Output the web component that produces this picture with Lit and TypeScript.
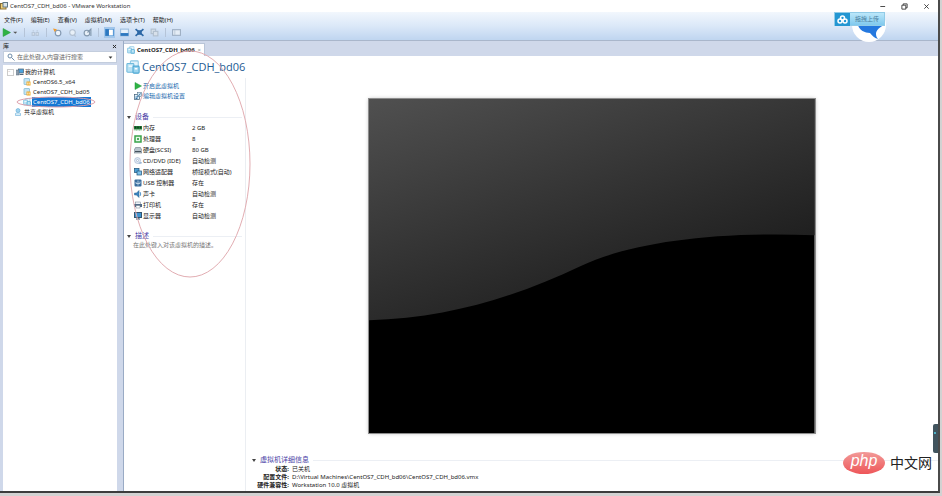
import { LitElement, html, svg, css } from "lit";
import { customElement } from "lit/decorators.js";

const glyph = (body: unknown, size = 8) =>
  html`<svg class="glyph" width=${size} height=${size} viewBox="0 0 16 16" aria-hidden="true">${body}</svg>`;

const vmShape = svg`<rect x="5" y="1" width="9" height="10" rx="1" fill="#e2f3fb" stroke="#8cc8e4" stroke-width="1.2"/><rect x="1" y="4" width="8" height="10" rx="1" fill="#b9e2f4" stroke="#6fb9dc" stroke-width="1.2"/><rect x="8" y="7" width="7" height="8" rx="1" fill="#9ad4ee" stroke="#4ba6d2" stroke-width="1.2"/><path d="M3 7h4M10 10h3" stroke="#fff" stroke-width="1.5"/>`;
const pausedShape = svg`<rect x="2" y="1" width="11" height="12" rx="1" fill="#c3e4f4" stroke="#7fb9d4" stroke-width="1.5"/><rect x="7" y="7" width="8" height="8" fill="#f0ab2a"/><path d="M9.500 9v4M12.500 9v4" stroke="#fff" stroke-width="1.500"/>`;
const hostShape = svg`<rect x="5" y="2" width="10" height="8" fill="#4aa3dd" stroke="#50667a" stroke-width="1.500"/><rect x="1" y="4" width="5" height="10" fill="#8a9aaa" stroke="#50667a"/><path d="M7 13h8" stroke="#50667a" stroke-width="2"/>`;
const sharedShape = svg`<circle cx="8" cy="5" r="4" fill="#9fd2ee" stroke="#4f9fd0"/><path d="M3 15v-4c0-2 10-2 10 0v4z" fill="#d6ecf7" stroke="#4f9fd0"/>`;
const playShape = svg`<path d="M2 1l13 7-13 7z" fill="#2fb344" stroke="#1f9a38"/>`;
const editShape = svg`<rect x="1" y="5" width="10" height="10" fill="#e3f2fa" stroke="#47677f" stroke-width="1.500"/><rect x="7" y="1" width="8" height="8" fill="#cfe6f3" stroke="#47677f"/><path d="M3 10h5M3 13h4M13 3L8 9" stroke="#3274a8" stroke-width="2"/>`;

const devices = [
  { name: "内存", value: "2 GB", icon: svg`<rect y="4" width="16" height="7" fill="#22823a"/><path d="M3 5v4M8 5v4M13 5v4" stroke="#12351c" stroke-width="3"/><path d="M1 12h14" stroke="#66b072" stroke-width="2" stroke-dasharray="2 1"/>` },
  { name: "处理器", value: "8", icon: svg`<rect x="2" y="2" width="12" height="12" fill="#e7f7e9" stroke="#3aa34a" stroke-width="3"/><rect x="6" y="6" width="4" height="4" fill="#4fae5c"/>` },
  { name: "硬盘(SCSI)", value: "80 GB", icon: svg`<path d="M3 3h10l3 6v5H0V9z" fill="#b9c3cc" stroke="#5a6670"/><path d="M2 11h12" stroke="#44515c" stroke-width="2"/>` },
  { name: "CD/DVD (IDE)", value: "自动检测", icon: svg`<circle cx="7" cy="7" r="6" fill="#dfe9f5" stroke="#94a5c0"/><circle cx="7" cy="7" r="2" fill="#fff" stroke="#8b9db9"/><path d="M8 13h7v-3z" fill="#6090c0"/>` },
  { name: "网络适配器", value: "桥接模式(自动)", icon: svg`<rect x="1" y="1" width="9" height="8" fill="#4b9fd6" stroke="#27587d" stroke-width="1.500"/><rect x="6" y="6" width="9" height="8" fill="#7cc0ea" stroke="#27587d" stroke-width="1.500"/>` },
  { name: "USB 控制器", value: "存在", icon: svg`<rect x="1" y="1" width="14" height="14" rx="2" fill="#3a6c9c"/><path d="M8 3v10M4 6v3h4M12 5v4H8" fill="none" stroke="#d8e9f7" stroke-width="1.500"/>` },
  { name: "声卡", value: "自动检测", icon: svg`<path d="M1 6h4l5-5v14l-5-5H1z" fill="#3c84c0" stroke="#28608f"/><path d="M12 4q3 4 0 8" fill="none" stroke="#5698cd" stroke-width="2"/>` },
  { name: "打印机", value: "存在", icon: svg`<rect x="3" y="2" width="10" height="5" fill="#eef3f8" stroke="#687787"/><rect x="0" y="6" width="16" height="6" fill="#516a86"/><rect x="4" y="9" width="8" height="5" fill="#fff" stroke="#687787"/>` },
  { name: "显示器", value: "自动检测", icon: svg`<rect x="1" y="1" width="14" height="10" fill="#3e92cf" stroke="#34556f" stroke-width="2"/><path d="M4 14h8M8 11v3" stroke="#34556f" stroke-width="2"/>` },
];

const tools = [
  { label: "快照", icon: svg`<circle cx="9" cy="9" r="5" fill="#eef4fb" stroke="#8399b2" stroke-width="2"/><path d="M0 1l7 1-4 5z" fill="#ee9a2f"/>` },
  { label: "恢复快照", icon: svg`<circle cx="8" cy="8" r="5" fill="#e8f0f8" stroke="#b3c1d2" stroke-width="2"/><path d="M11 13l3 2" stroke="#b3c1d2" stroke-width="2"/>` },
  { label: "管理快照", icon: svg`<circle cx="7" cy="9" r="5" fill="#e8f0f8" stroke="#8398ae" stroke-width="2"/><path d="M8 8l6-6v12" fill="none" stroke="#8398ae" stroke-width="2"/>` },
];
const views = [
  { label: "显示库", on: true, icon: svg`<rect x="1" y="2" width="14" height="12" fill="#fff" stroke="#5b9bd8" stroke-width="2"/><rect x="1" y="2" width="6" height="12" fill="#2c78c0"/>` },
  { label: "缩略图栏", on: false, icon: svg`<rect x="1" y="2" width="14" height="12" fill="#e6f1fb" stroke="#9fc0df" stroke-width="2"/><rect x="1" y="9" width="14" height="5" fill="#2c78c0"/>` },
  { label: "全屏", on: false, icon: svg`<rect x="4" y="4" width="8" height="8" fill="#2c68a6"/><path d="M1 2l14 12M15 2L1 14" stroke="#2c68a6" stroke-width="3"/>` },
  { label: "Unity", on: false, icon: svg`<rect x="2" y="2" width="8" height="8" fill="#d7e0ea" stroke="#b1bfce" stroke-width="2"/><rect x="6" y="6" width="8" height="8" fill="#d7e0ea" stroke="#b1bfce" stroke-width="2"/>` },
];

@customElement("app-root")
export class AppRoot extends LitElement {
  static styles = css`
    :host {
      display: block;
      position: relative;
      min-height: 100vh;
      box-sizing: border-box;
      padding: 0 2px 3px 0;
      background: #d2d2d2;
      font: 6px/10px "Noto Sans", "Noto Sans CJK SC", sans-serif;
      color: #222;
    }
    * { box-sizing: border-box; }
    button, input {
      font: inherit;
      color: inherit;
      border: 0;
      padding: 0;
      margin: 0;
      background: none;
    }
    button { display: inline-flex; align-items: center; white-space: nowrap; }
    h1, h2, p, dl, dd, dt, ul { margin: 0; padding: 0; }
    .glyph { display: block; flex: none; }
    .window {
      min-height: calc(100vh - 3px);
      display: flex;
      flex-direction: column;
      background: #cfd8ea;
      border-right: 2px solid #4a4a4a;
      border-bottom: 2px solid #3d3d3d;
    }
    .titlebar {
      height: 12px;
      display: flex;
      align-items: center;
      gap: 2px;
      background: #fff;
      padding-right: 8px;
      color: #333;
    }
    .titlebar .name { flex: 1; }
    .controls { display: flex; gap: 15px; }
    .bars { background: linear-gradient(#f2f7fd, #dbe8f8 50%, #bfd5f0); height: 29px; padding-top: 1px; border-bottom: 1px solid #a9b6cb; }
    .menu { display: flex; gap: 8px; height: 13px; padding-left: 4px; }
    .tools { display: flex; align-items: center; height: 13px; padding-left: 2px; }
    .tools button { margin-right: 6px; }
    .tools .on { outline: 1px solid #a3c6ea; background: #d5e8fa; }
    .sep { width: 1px; height: 9px; background: #b5c4d8; margin-right: 6px; }
    .content { flex: 1; display: flex; }
    .library { width: 124px; flex: none; display: flex; flex-direction: column; padding-left: 3px; border-right: 1px solid #9aabc5; padding-right: 6px; }
    .library-head { display: flex; justify-content: space-between; align-items: center; height: 10px; }
    .search { display: flex; align-items: center; gap: 2px; height: 12px; padding: 0 3px; background: #fff; border: 1px solid #c3cddd; margin-bottom: 2px; }
    .search input { flex: 1; min-width: 0; outline: none; }
    .search input::placeholder { color: #666; opacity: 1; }
    .tree { flex: 1; background: #fff; padding: 2px 0 0 4px; list-style: none; }
    .tree li { display: flex; height: 10px; align-items: center; }
    .tree button { gap: 2px; height: 10px; }
    .tree .root::before { content: "−"; width: 5px; height: 5px; border: 1px solid #ccc; line-height: 3px; margin-right: 2px; color: #888; font-size: 4px; }
    .tree .root button { gap: 1px; }
    .tree .leaf { padding-left: 16px; }
    .tree .shared { padding-left: 7px; }
    .tree .selected { position: relative; }
    .tree .selected span { background: #1477d4; color: #fff; outline: 1px solid #1477d4; line-height: 8px; }
    .ring { position: absolute; left: 9px; top: -1px; }
    .main { flex: 1; min-width: 0; display: flex; flex-direction: column; background: #fff; }
    .tabs { height: 15px; display: flex; align-items: flex-end; background: #cfd8ea; }
    .tab { display: flex; align-items: center; gap: 2px; height: 13px; width: 81px; padding-left: 3px; background: #fff; border: 1px solid #b9c5d8; border-width: 1px 1px 0 0; font-family: "Open Sans", sans-serif; font-weight: 700; }
    .tab span { flex: 1; white-space: nowrap; }
    .tab button { padding-right: 3px; color: #888; font-weight: 400; }
    .heading { display: flex; align-items: center; gap: 2px; height: 22px; padding-left: 2px; }
    .heading h1 { font: 400 11px/16px "Open Sans", sans-serif; color: #245b93; }
    .panes { flex: 1; display: flex; }
    .info { width: 122px; flex: none; border-right: 1px solid #ebeef2; padding: 3px 3px 0; }
    .actions { padding-left: 7px; margin-bottom: 11px; }
    .actions button { display: flex; gap: 1px; height: 10px; color: #1767ad; }
    h2 { display: flex; align-items: center; gap: 4px; font-size: 7px; line-height: 10px; font-weight: 400; color: #4b3fa6; white-space: nowrap; }
    h2::before { content: ""; border: 2px solid transparent; border-top: 3px solid #444; border-bottom: 0; }
    h2::after { content: ""; flex: 1; height: 1px; background: #eceff4; }
    .devices { border-collapse: collapse; margin: 0 0 10px 7px; white-space: nowrap; }
    .devices th, .devices td { padding: 0; height: 11px; font-weight: 400; text-align: left; }
    .devices th { width: 58px; }
    .devices button { gap: 1px; height: 11px; display: flex; }
    .note { padding-left: 6px; color: #777; line-height: 8px; }
    .preview { flex: 1; min-width: 0; display: flex; flex-direction: column; padding: 21px 0 2px; }
    .screen { display: block; width: 64.4%; margin: 0 auto 20px; outline: 1px solid #8c8c8c; box-shadow: 0 0 4px #aaa; }
    .details { padding-left: 6px; margin-top: auto; }
    .details dl { display: grid; grid-template-columns: 37px 1fr; column-gap: 3px; line-height: 8px; }
    .details dt { text-align: right; font-weight: 700; white-space: nowrap; }
    .upload { position: absolute; right: 56px; top: 8px; width: 52px; height: 34px; }
    .upload .bird { position: absolute; right: 0; top: 0; }
    .upload button { position: absolute; left: 0; top: 4px; width: 51px; height: 14px; background: linear-gradient(#bce7fa, #80c9ee); border: 1px solid #91cbe7; color: #4d7f9e; }
    .cloud { width: 15px; height: 13px; background: #2396d2; margin-right: 5px; }
    .loop { position: absolute; left: 129px; top: 50px; pointer-events: none; }
    .handle { position: absolute; right: 4px; bottom: 43px; width: 5px; height: 29px; background: #41545e; border-radius: 2px 0 0 2px; }
    .handle::before { content: ""; display: block; margin: 8px 0 0 1px; width: 2px; height: 2px; background: #4fb0c4; }
    .brand { position: absolute; right: 10px; bottom: 22px; display: flex; align-items: center; gap: 5px; color: #222; font-size: 14px; line-height: 22px; }
    .php { width: 42px; height: 22px; border-radius: 50%; background: linear-gradient(#f29a98, #ee5659); color: #fff; font: italic 16px/18px "Liberation Sans", sans-serif; text-align: center; }
  `;

  render() {
    return html`
      <div class="window">
        <header class="titlebar">
          ${glyph(svg`<rect x="1" y="3" width="11" height="11" fill="#f4d277" stroke="#8a7035" stroke-width="2"/><rect x="6" y="1" width="9" height="9" fill="#d9e4ea" stroke="#607886" stroke-width="2"/>`)}
          <span class="name">CentOS7_CDH_bd06 - VMware Workstation</span>
          <div class="controls">
            <button aria-label="最小化">${glyph(svg`<path d="M3 8h11" stroke="#333" stroke-width="2"/>`, 7)}</button>
            <button aria-label="还原">${glyph(svg`<path d="M5 5V2h9v9h-3M2 5h9v9H2z" fill="none" stroke="#333" stroke-width="2"/>`, 7)}</button>
            <button aria-label="关闭">${glyph(svg`<path d="M3 3l10 10M13 3L3 13" stroke="#333" stroke-width="2"/>`, 7)}</button>
          </div>
        </header>
        <div class="bars">
          <nav class="menu">
            ${["文件(F)", "编辑(E)", "查看(V)", "虚拟机(M)", "选项卡(T)", "帮助(H)"].map((m) => html`<button>${m}</button>`)}
          </nav>
          <div class="tools">
            <button aria-label="启动">${glyph(playShape, 9)}${glyph(svg`<path d="M5 6h9l-4 5z" fill="#555"/>`, 7)}</button>
            <div class="sep"></div>
            <button aria-label="发送">${glyph(svg`<path d="M2 13V8h4v5zM9 13V8h4v5zM3 5h2M10 5h2" fill="#dbe5f0" stroke="#b7c6d8" stroke-width="2"/>`, 9)}</button>
            <div class="sep"></div>
            ${tools.map((t) => html`<button aria-label=${t.label}>${glyph(t.icon, 9)}</button>`)}
            <div class="sep"></div>
            ${views.map((t) => html`<button class=${t.on ? "on" : ""} aria-label=${t.label}>${glyph(t.icon, 9)}</button>`)}
            <div class="sep"></div>
            <button aria-label="控制台">${glyph(svg`<rect x="1" y="3" width="14" height="10" fill="#e5edf6" stroke="#9fb0c4" stroke-width="2"/><path d="M5 4v8" stroke="#9fb0c4"/>`, 9)}</button>
          </div>
        </div>
        <div class="content">
          <aside class="library">
            <div class="library-head"><span>库</span><button aria-label="关闭库">${glyph(svg`<path d="M3 3l10 10M13 3L3 13" stroke="#222" stroke-width="3"/>`, 5)}</button></div>
            <label class="search">
              ${glyph(svg`<circle cx="6" cy="6" r="4" fill="none" stroke="#6f8dab" stroke-width="2"/><path d="M9 9l6 6" stroke="#6f8dab" stroke-width="2"/>`)}
              <input aria-label="搜索" placeholder="在此处键入内容进行搜索" />
              ${glyph(svg`<path d="M2 5h12l-6 7z" fill="#333"/>`, 5)}
            </label>
            <ul class="tree">
              <li class="root"><button>${glyph(hostShape)}<span>我的计算机</span></button></li>
              <li class="leaf"><button>${glyph(pausedShape)}<span>CentOS6.5_x64</span></button></li>
              <li class="leaf"><button>${glyph(pausedShape)}<span>CentOS7_CDH_bd05</span></button></li>
              <li class="leaf selected">
                <button>${glyph(vmShape)}<span>CentOS7_CDH_bd06</span></button>
                <svg class="ring" width="80" height="12" viewBox="0 0 80 12" aria-hidden="true"><ellipse cx="40" cy="6" rx="39" ry="5" fill="none" stroke="#dda0ac"/></svg>
              </li>
              <li class="shared"><button>${glyph(sharedShape)}<span>共享虚拟机</span></button></li>
            </ul>
          </aside>
          <main class="main">
            <div class="tabs">
              <div class="tab">${glyph(vmShape)}<span>CentOS7_CDH_bd06</span><button aria-label="关闭标签">×</button></div>
            </div>
            <div class="heading">${glyph(vmShape, 14)}<h1>CentOS7_CDH_bd06</h1></div>
            <div class="panes">
              <section class="info">
                <div class="actions">
                  <button>${glyph(playShape)}开启此虚拟机</button>
                  <button>${glyph(editShape)}编辑虚拟机设置</button>
                </div>
                <h2>设备</h2>
                <table class="devices">
                  ${devices.map((d) => html`<tr><th scope="row"><button>${glyph(d.icon)}${d.name}</button></th><td>${d.value}</td></tr>`)}
                </table>
                <h2>描述</h2>
                <p class="note">在此处键入对该虚拟机的描述。</p>
              </section>
              <section class="preview">
                <svg class="screen" viewBox="0 0 445 334" role="img" aria-label="虚拟机屏幕">
                  <defs><linearGradient id="sheen" gradientUnits="userSpaceOnUse" x1="0" y1="0" x2="94" y2="271"><stop offset="0" stop-color="#505050"/><stop offset="1" stop-color="#1d1d1d"/></linearGradient></defs>
                  <rect width="445" height="334" fill="#000"/>
                  <path d="M0 0h445v136C340 132 260 144 211 167C150 196 80 219 0 221z" fill="url(#sheen)"/>
                </svg>
                <div class="details">
                  <h2>虚拟机详细信息</h2>
                  <dl>
                    <dt>状态:</dt><dd>已关机</dd>
                    <dt>配置文件:</dt><dd>D:\\Virtual Machines\\CentOS7_CDH_bd06\\CentOS7_CDH_bd06.vmx</dd>
                    <dt>硬件兼容性:</dt><dd>Workstation 10.0 虚拟机</dd>
                  </dl>
                </div>
              </section>
            </div>
          </main>
        </div>
      </div>
      <svg class="loop" width="122" height="228" viewBox="0 0 122 228" aria-hidden="true"><ellipse cx="61" cy="114" rx="60" ry="113" fill="none" stroke="#e2adb2"/></svg>
      <div class="upload">
        <svg class="bird" width="34" height="34" viewBox="0 0 34 34" aria-hidden="true"><circle cx="17" cy="17" r="17" fill="#fff"/><path d="M6 17c7 2 14 0 20-4l6 4c-4 2-8 5-8 9 0 2 1 4 2 5-4-1-6-4-8-6-5 0-11-3-12-8z" fill="#2478df"/></svg>
        <button><svg class="cloud" viewBox="0 0 15 13" aria-hidden="true"><g fill="none" stroke="#fff" stroke-width="1.500"><circle cx="5" cy="8" r="2"/><circle cx="10" cy="8" r="2"/><circle cx="7.500" cy="5" r="2"/></g></svg>拖拽上传</button>
      </div>
      <div class="handle"></div>
      <div class="brand"><span class="php">php</span><span>中文网</span></div>
    `;
  }
}
